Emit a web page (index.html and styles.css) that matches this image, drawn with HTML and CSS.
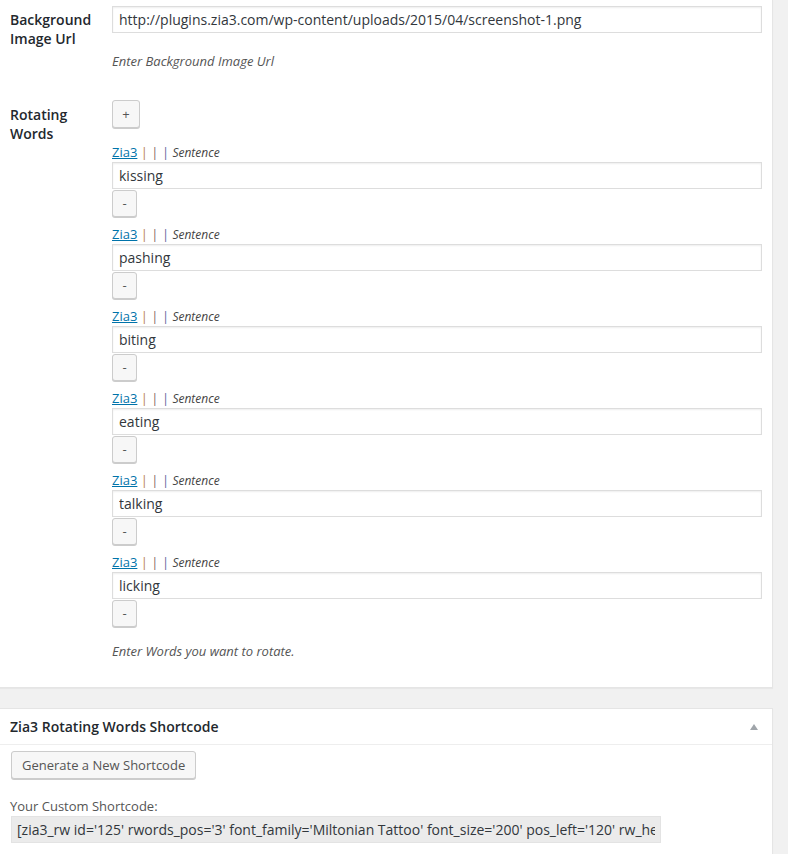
FILE: index.html
```html
<!DOCTYPE html>
<html lang="en">
<head>
<meta charset="utf-8">
<title>Zia3 Rotating Words</title>
<link rel="stylesheet" href="styles.css">
</head>
<body>
<div class="wrap">
  <div class="postbox settings">
    <div class="row row-url">
      <div class="th">Background Image Url</div>
      <div class="td">
        <input class="text" type="text" value="http://plugins.zia3.com/wp-content/uploads/2015/04/screenshot-1.png">
        <p class="desc desc-url">Enter Background Image Url</p>
      </div>
    </div>
    <div class="row row-words">
      <div class="th">Rotating Words</div>
      <div class="td">
        <button class="btn btn-add" type="button">+</button>
        <div class="word-list">
          <div class="word">
            <div class="word-meta"><a href="#">Zia3</a> <span class="p1">|</span> <span class="p2">|</span> <span class="p3">|</span> <em>Sentence</em></div>
            <input class="text" type="text" value="kissing">
            <button class="btn btn-remove" type="button">-</button>
          </div>
          <div class="word">
            <div class="word-meta"><a href="#">Zia3</a> <span class="p1">|</span> <span class="p2">|</span> <span class="p3">|</span> <em>Sentence</em></div>
            <input class="text" type="text" value="pashing">
            <button class="btn btn-remove" type="button">-</button>
          </div>
          <div class="word">
            <div class="word-meta"><a href="#">Zia3</a> <span class="p1">|</span> <span class="p2">|</span> <span class="p3">|</span> <em>Sentence</em></div>
            <input class="text" type="text" value="biting">
            <button class="btn btn-remove" type="button">-</button>
          </div>
          <div class="word">
            <div class="word-meta"><a href="#">Zia3</a> <span class="p1">|</span> <span class="p2">|</span> <span class="p3">|</span> <em>Sentence</em></div>
            <input class="text" type="text" value="eating">
            <button class="btn btn-remove" type="button">-</button>
          </div>
          <div class="word">
            <div class="word-meta"><a href="#">Zia3</a> <span class="p1">|</span> <span class="p2">|</span> <span class="p3">|</span> <em>Sentence</em></div>
            <input class="text" type="text" value="talking">
            <button class="btn btn-remove" type="button">-</button>
          </div>
          <div class="word">
            <div class="word-meta"><a href="#">Zia3</a> <span class="p1">|</span> <span class="p2">|</span> <span class="p3">|</span> <em>Sentence</em></div>
            <input class="text" type="text" value="licking">
            <button class="btn btn-remove" type="button">-</button>
          </div>
        </div>
        <p class="desc desc-words">Enter Words you want to rotate.</p>
      </div>
    </div>
  </div>

  <div class="postbox shortcode">
    <div class="hndle">
      <h2>Zia3 Rotating Words Shortcode</h2>
      <span class="toggle"></span>
    </div>
    <div class="inside">
      <button class="btn btn-generate" type="button">Generate a New Shortcode</button>
      <p class="sc-label">Your Custom Shortcode:</p>
      <input class="sc-box" type="text" readonly value="[zia3_rw id='125' rwords_pos='3' font_family='Miltonian Tattoo' font_size='200' pos_left='120' rw_height='300' rw_width='600']">
    </div>
  </div>
</div>
</body>
</html>
```

FILE: styles.css
```css
html, body {
  margin: 0;
  padding: 0;
  background: #f1f1f1;
}

body {
  font-family: "Open Sans", "Noto Sans", sans-serif;
  font-size: 13px;
  color: #444;
}

.wrap {
  width: 773px;
}

.postbox {
  background: #fff;
  border-right: 1px solid #e5e5e5;
  border-bottom: 1px solid #e5e5e5;
  box-shadow: 0 1px 1px rgba(0, 0, 0, 0.04);
  box-sizing: border-box;
  width: 773px;
}

.settings {
  padding: 6px 10px 27px 0;
}

.row {
  display: grid;
  grid-template-columns: 112px 1fr;
}

.th {
  padding-left: 10px;
  font-size: 14px;
  line-height: 19px;
  font-weight: 600;
  color: #23282d;
  margin-top: 4px;
}

.row-words {
  margin-top: 30px;
}

.row-words .th {
  margin-top: 5px;
}

.text {
  display: block;
  box-sizing: border-box;
  width: 100%;
  height: 27px;
  margin: 0;
  padding: 0 6px;
  border: 1px solid #ddd;
  box-shadow: inset 0 1px 2px rgba(0, 0, 0, 0.07);
  background: #fff;
  font-family: "Open Sans", "Noto Sans", sans-serif;
  font-size: 14px;
  color: #32373c;
  outline: none;
}

.desc {
  margin: 0;
  font-size: 13px;
  line-height: 18px;
  font-style: italic;
  color: #555;
}

.desc-url {
  margin-top: 19px;
}

.desc-words {
  margin-top: 15px;
}

.btn {
  display: block;
  box-sizing: border-box;
  margin: 0;
  padding: 0;
  background: #f7f7f7;
  border: 1px solid #ccc;
  border-radius: 3px;
  box-shadow: 0 1px 0 #ccc;
  font-family: "Open Sans", "Noto Sans", sans-serif;
  font-size: 13px;
  color: #555;
  cursor: pointer;
  white-space: nowrap;
}

.btn-add {
  width: 28px;
  height: 28px;
  line-height: 26px;
}

.word-list {
  margin-top: 15px;
}

.word {
  margin-bottom: 8px;
}

.word-meta {
  font-size: 13px;
  line-height: 18px;
  height: 18px;
  color: #555;
  white-space: nowrap;
}

.word-meta a {
  color: #0073aa;
  text-decoration: underline;
}

.word-meta .p1 { color: #b8824e; }
.word-meta .p2 { color: #8a6a66; }
.word-meta .p3 { color: #5f66a0; }

.word-meta em {
  font-size: 12px;
  color: #444;
}

.word .text {
  margin-top: 1px;
}

.btn-remove {
  margin-top: 1px;
  width: 25px;
  height: 27px;
  line-height: 25px;
}

.shortcode {
  margin-top: 20px;
  border-top: 1px solid #e5e5e5;
  padding-bottom: 20px;
}

.hndle {
  display: flex;
  align-items: center;
  justify-content: space-between;
  height: 35px;
  padding: 0 14px 0 10px;
  border-bottom: 1px solid #eee;
}

.hndle h2 {
  margin: 0;
  font-size: 14px;
  line-height: 19px;
  font-weight: 600;
  color: #23282d;
}

.toggle {
  width: 0;
  height: 0;
  border-left: 4px solid transparent;
  border-right: 4px solid transparent;
  border-bottom: 6px solid #a0a5aa;
}

.inside {
  padding: 6px 10px 0 10px;
}

.btn-generate {
  margin-left: 1px;
  height: 28px;
  line-height: 26px;
  padding: 0 10px;
  text-align: center;
}

.sc-label {
  margin: 18px 0 0 0;
  font-size: 13px;
  line-height: 18px;
  color: #555;
}

.sc-box {
  display: block;
  box-sizing: border-box;
  margin: 1px 0 0 1px;
  width: 650px;
  height: 27px;
  padding: 0 5px;
  border: 1px solid #e3e3e3;
  background: #ebebeb;
  font-family: "Open Sans", "Noto Sans", sans-serif;
  font-size: 14px;
  color: #32373c;
  outline: none;
}
```
